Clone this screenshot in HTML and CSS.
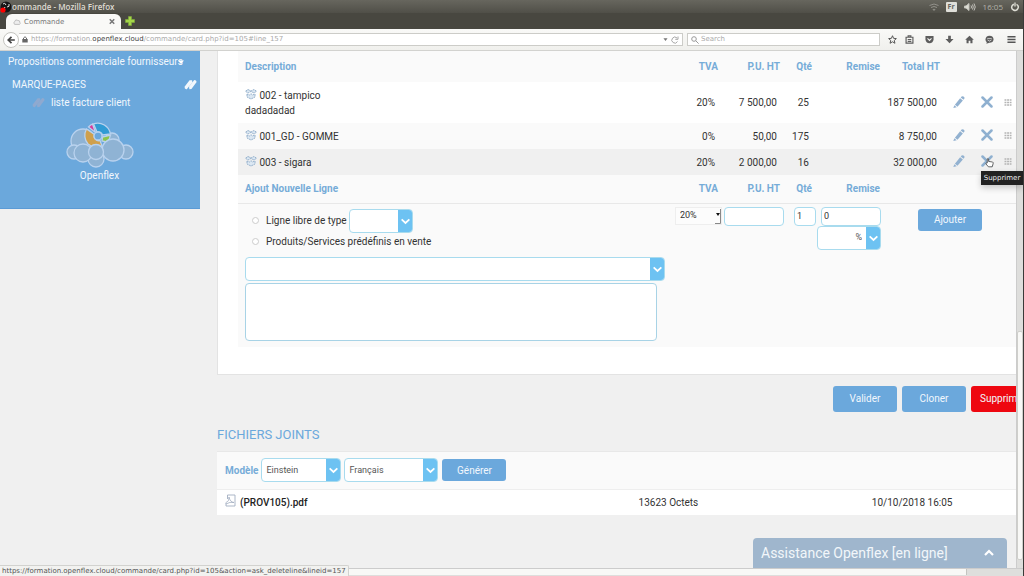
FILE: index.html
```html
<!DOCTYPE html>
<html lang="fr">
<head>
<meta charset="utf-8">
<title>Commande</title>
<link rel="stylesheet" href="styles.css">
</head>
<body>
<svg class="defs" aria-hidden="true">
  <symbol id="chevron" viewBox="0 0 10 10"><path d="M1.5 3.5 5 6.8 8.5 3.5" fill="none" stroke="#fff" stroke-width="1.6"/></symbol>
  <symbol id="box" viewBox="0 0 12 12"><path d="M3 1.5 6 3 9 1.5 11.5 3.2 9 5 6 3.4 3 5 .5 3.2ZM2 6v3l4 2 4-2V6L7.500 7 6 5.600 4.500 7Z" fill="#dce8f3" stroke="#8fabc8" stroke-width=".9" stroke-dasharray="2 .6"/></symbol>
  <symbol id="pencil" viewBox="0 0 12 12"><path d="M8.600.6Q10.800-.4 11.700 2L10.500 3.700 7.700 1.500ZM7.100 2.200 9.900 4.500 4.500 10.800 1.900 8.700ZM1.400 9.300 3.700 11.200.3 12Z" fill="#92b1d0"/></symbol>
  <symbol id="cross" viewBox="0 0 12 12"><path d="M1.500 1.500 10.500 10.500M10.500 1.500 1.500 10.500" fill="none" stroke="#8fb0d0" stroke-width="2.500" stroke-linecap="round"/></symbol>
  <symbol id="grip" viewBox="0 0 8 8"><path d="M.5 2H7.500M.5 4.500H7.500M.5 7H7.500" fill="none" stroke="#b4b4b4" stroke-width="1.700" stroke-dasharray="1.900 .7"/></symbol>
  <symbol id="books" viewBox="0 0 14 12"><path d="M6 1 .6 8Q.4 11 3 10.600L9 3 8.700 1ZM11 .6 5.400 8 5.800 10.700 8 10.200 13.600 2.700Q13.500.6 11 .6Z" fill="currentColor"/></symbol>
</svg>

<header class="titlebar">
  <svg class="app-icon" viewBox="0 0 12 12"><circle cx="6" cy="6" r="5.500" fill="#161616"/><path d="M3 3Q5 1 6 4M9 3Q10 6 7 6M5 9Q3 8 5 6" stroke="#ddd" fill="none"/><circle cx="3" cy="9" r="2.600" fill="#f00"/></svg>
  <span class="window-title">ommande - Mozilla Firefox</span>
  <div class="tray">
    <svg class="ico-10" viewBox="0 0 10 10" fill="none" stroke="#92918a" stroke-width="1"><path d="M.5 3.500Q5 .5 9.500 3.500M2 5.500Q5 3.500 8 5.500M4 7.500Q5 7 6 7.500L5 8.500Z"/></svg>
    <span class="lang">Fr</span>
    <svg class="ico-12" viewBox="0 0 12 10" fill="none" stroke="#c4c3bc" stroke-width="1"><path d="M.5 4H2L5 1.500V8.500L2 6H.5Z" fill="#dfdfd6"/><path d="M7 3.500Q8 5 7 6.500M8.500 2.500Q10 5 8.500 7.500M10 1.500Q12.500 5 10 8.500"/></svg>
    <span>16:05</span>
    <svg class="ico-10" viewBox="0 0 10 10" fill="none" stroke="#dfdfd6"><circle cx="5" cy="5.200" r="3.200" stroke-width="1.500" stroke-dasharray="17 3.100" transform="rotate(-62 5 5.200)"/><path d="M5 .5V4.500" stroke-width="1.300"/></svg>
  </div>
</header>
<div class="tabstrip">
  <div class="tab">
    <svg class="ico-8" viewBox="0 0 10 10" fill="#eee" stroke="#b2b2b2"><path d="M2 8Q0 6 2 4.500 3 1 6 3 9 3 8.500 5.500 10 7 8 8Z"/></svg>
    <span class="tab-title">Commande</span>
    <button class="plain" type="button" aria-label="Fermer"><svg class="ico-6" viewBox="0 0 8 8"><path d="M1 1 7 7M7 1 1 7" stroke="#777" stroke-width="2"/></svg></button>
  </div>
  <button class="plain new-tab" type="button" aria-label="Nouvel onglet"><svg class="ico-10" viewBox="0 0 10 10"><path d="M3.500.5H6.500V3.500H9.500V6.500H6.500V9.500H3.500V6.500H.5V3.500H3.500Z" fill="#a4d648" stroke="#82ad3a" stroke-width=".6"/></svg></button>
</div>
<div class="toolbar">
  <button class="back" type="button" aria-label="Retour"><svg class="ico-8" viewBox="0 0 8 8"><path d="M4.500.8 1.200 4 4.500 7.200M1.500 4H7.800" fill="none" stroke="#444" stroke-width="1.700"/></svg></button>
  <div class="address">
    <svg class="ico-6" viewBox="0 0 6 7"><path d="M1.500 3V2Q3-.5 4.500 2V3" fill="none" stroke="#666"/><path d="M.3 3H5.700V6.500H.3Z" fill="#666"/></svg>
    <span class="url">https://formation.<b>openflex.cloud</b>/commande/card.php?id=105#line_157</span>
    <svg class="ico-5" viewBox="0 0 6 6"><path d="M.5 1.500H5.500L3 4.800Z" fill="#777"/></svg>
    <svg class="ico-8" viewBox="0 0 8 8" fill="none" stroke="#a5a5a5"><path d="M6.500 5.500A3 3 0 1 1 6 2M7 .5V3.300H4.300"/></svg>
  </div>
  <label class="search">
    <svg class="ico-8" viewBox="0 0 8 8" fill="none" stroke="#999"><circle cx="3" cy="3" r="2.300"/><path d="M4.800 4.800 7.600 7.600"/></svg>
    <input type="text" placeholder="Search" aria-label="Search">
  </label>
  <div class="tools">
    <svg class="ico-9 star" viewBox="0 0 10 10"><path d="M5 .8 6.200 3.700 9.300 4 7 6 7.700 9.200 5 7.500 2.300 9.200 3 6 .7 4 3.800 3.700Z" fill="none" stroke="#555" stroke-width="1.100"/></svg>
    <svg class="ico-9" viewBox="0 0 10 10"><path d="M1.200 2.500H8.800V9H1.200ZM3.500 2.500V1H6.500V2.500M3 5H7M3 7H7" fill="none" stroke="#5d5d5d" stroke-width="1.300"/></svg>
    <svg class="ico-9" viewBox="0 0 10 10"><path d="M.5 1H9.500V5Q9 9 5 9.300 1 9 .5 5Z" fill="#5d5d5d"/><path d="M2.800 3.800 5 6 7.200 3.800" fill="none" stroke="#f4f4f2" stroke-width="1.200"/></svg>
    <svg class="ico-9" viewBox="0 0 10 10"><path d="M3.500.8H6.500V4.500H9.500L5 9.300.5 4.500H3.500Z" fill="#5d5d5d"/></svg>
    <svg class="ico-9" viewBox="0 0 10 10"><path d="M5 .8 9.800 5.300H8.300V9.300H6V6.300H4V9.300H1.700V5.300H.2Z" fill="#5d5d5d"/></svg>
    <svg class="ico-9" viewBox="0 0 10 10"><path d="M5 .8Q9.500 1 9.500 5 9 8.500 5 8.700L1.500 9.600 2 8Q.5 7 .5 5 .8 1 5 .8Z" fill="#5d5d5d"/><path d="M2.500 4H7.500M2.800 5.500Q5 8 7.200 5.500" stroke="#eee" fill="none" stroke-width=".8"/></svg>
    <svg class="ico-9 menu" viewBox="0 0 10 10"><path d="M.5 2H9.500M.5 5H9.500M.5 8H9.500" stroke="#555" stroke-width="1.800"/></svg>
  </div>
</div>

<div class="browser-body">
<div class="page">
  <nav class="sidebar">
    <a class="side-top" href="#">Propositions commerciale fournisseurs<svg class="caret" viewBox="0 0 6 6"><path d="M0 1.500H6L3 5Z" fill="#fff"/></svg></a>
    <div class="side-head"><span>MARQUE-PAGES</span><svg class="book-icon" aria-hidden="true"><use href="#books"/></svg></div>
    <a class="side-item" href="#"><svg class="book-icon dim" aria-hidden="true"><use href="#books"/></svg>liste facture client</a>
    <a class="logo" href="#">
      <svg viewBox="0 0 68 46" fill="#8fb3d4" stroke="#b9d2ee" stroke-width="1.300">
        <circle cx="46" cy="18" r="7"/><circle cx="17" cy="19" r="12"/><circle cx="8" cy="30" r="7"/><circle cx="60" cy="30" r="7"/><circle cx="30" cy="37" r="8"/><circle cx="17" cy="31" r="9"/>
        <path d="M28.500 12.500 20.500 7A13 13 0 0 0 22 22L27 25 36 24 34 18.500A4.500 4.500 0 0 1 28.500 12.500Z" fill="#cfa04c"/>
        <path d="M31 10 27.500 1.800A13 13 0 0 1 44.500 12L36.500 13A4.500 4.500 0 0 0 31 10Z" fill="#319bd4"/>
        <path d="M29.500 10.500 22.500 5A13 13 0 0 1 26.500 2Z" fill="#d63b9c"/>
        <path d="M36.500 15 44.600 13A13 13 0 0 1 41 20L36 19Z" fill="#8dc44c"/>
        <circle cx="32" cy="14" r="4" fill="#6ba8dc"/>
        <circle cx="47" cy="28" r="11"/><circle cx="30" cy="30" r="7.500"/>
      </svg>
      <span>Openflex</span>
    </a>
  </nav>

  <main class="content">
    <section class="panel">
      <table class="lines">
        <colgroup><col><col class="c-tva"><col class="c-pu"><col class="c-qty"><col class="c-disc"><col class="c-total"><col class="c-edit"><col class="c-del"><col class="c-grip"></colgroup>
        <thead>
          <tr class="head-top"><th class="left" scope="col">Description</th><th scope="col">TVA</th><th scope="col">P.U. HT</th><th scope="col">Qté</th><th scope="col">Remise</th><th scope="col">Total HT</th><td colspan="3"></td></tr>
        </thead>
        <tbody>
          <tr class="tall"><td class="left"><svg class="box-icon" aria-hidden="true"><use href="#box"/></svg> 002 - tampico<br>dadadadad</td><td>20%</td><td>7 500,00</td><td>25</td><td></td><td>187 500,00</td><td class="act"><a href="#" aria-label="Modifier"><svg class="act-icon"><use href="#pencil"/></svg></a></td><td class="act"><a href="#" aria-label="Supprimer"><svg class="act-icon"><use href="#cross"/></svg></a></td><td class="act"><svg class="grip-icon"><use href="#grip"/></svg></td></tr>
          <tr class="alt"><td class="left"><svg class="box-icon" aria-hidden="true"><use href="#box"/></svg> 001_GD - GOMME</td><td>0%</td><td>50,00</td><td>175</td><td></td><td>8 750,00</td><td class="act"><a href="#" aria-label="Modifier"><svg class="act-icon"><use href="#pencil"/></svg></a></td><td class="act"><a href="#" aria-label="Supprimer"><svg class="act-icon"><use href="#cross"/></svg></a></td><td class="act"><svg class="grip-icon"><use href="#grip"/></svg></td></tr>
          <tr class="hovered"><td class="left"><svg class="box-icon" aria-hidden="true"><use href="#box"/></svg> 003 - sigara</td><td>20%</td><td>2 000,00</td><td>16</td><td></td><td>32 000,00</td><td class="act"><a href="#" aria-label="Modifier"><svg class="act-icon"><use href="#pencil"/></svg></a></td><td class="act"><a class="delete" href="#" aria-label="Supprimer"><svg class="act-icon"><use href="#cross"/></svg><svg class="pointer" viewBox="0 0 10 11"><path d="M2.500 6V1.500Q3.300.3 4 1.500V4.300L8.500 5Q9.500 5.500 9 7L8 10.300H3.800L1 7Q1 5.500 2.500 6Z" fill="#fff" stroke="#444" stroke-width=".9"/></svg></a></td><td class="act"><svg class="grip-icon"><use href="#grip"/></svg></td></tr>
        </tbody>
        <tbody>
          <tr class="head-add"><th class="left" scope="col">Ajout Nouvelle Ligne</th><th scope="col">TVA</th><th scope="col">P.U. HT</th><th scope="col">Qté</th><th scope="col">Remise</th><td colspan="4"></td></tr>
          <tr class="add-row">
            <td class="left">
              <div class="choice"><input type="radio" id="free" name="kind"><label for="free">Ligne libre de type</label><span class="combo type"><select aria-label="Type"><option></option></select><svg><use href="#chevron"/></svg></span></div>
              <div class="choice second"><input type="radio" id="pre" name="kind"><label for="pre">Produits/Services prédéfinis en vente</label></div>
              <span class="combo product"><select aria-label="Produit"><option></option></select><svg><use href="#chevron"/></svg></span>
              <textarea aria-label="Description"></textarea>
            </td>
            <td><span class="native"><select aria-label="TVA"><option>20%</option></select><svg viewBox="0 0 6 16"><path d="M1 5H5L3 8Z" fill="#111"/><path d="M5.500 1V15.500H0" fill="none" stroke="#888"/></svg></span></td>
            <td><input class="field" type="text" aria-label="P.U. HT"></td>
            <td><input class="field qty" type="text" value="1" aria-label="Qté"></td>
            <td><input class="field" type="text" value="0" aria-label="Remise"><span class="combo unit"><select aria-label="Unité"><option>%</option></select><svg><use href="#chevron"/></svg></span></td>
            <td class="submit" colspan="4"><button class="btn" type="button">Ajouter</button></td>
          </tr>
        </tbody>
      </table>
    </section>

    <div class="actions"><button class="btn big" type="button">Valider</button><button class="btn big" type="button">Cloner</button><button class="btn big danger" type="button">Supprimer</button></div>

    <h2>FICHIERS JOINTS</h2>
    <section class="files">
      <div class="generate">
        <label for="model">Modèle</label>
        <span class="combo model"><select id="model"><option>Einstein</option></select><svg><use href="#chevron"/></svg></span>
        <span class="combo language"><select aria-label="Langue"><option>Français</option></select><svg><use href="#chevron"/></svg></span>
        <button class="btn" type="button">Générer</button>
      </div>
      <table class="file-list"><tr>
        <td><a href="#"><svg class="pdf" viewBox="0 0 11 13"><path d="M2.500 5V1H10V12H1V9" fill="none" stroke="#a3afc2" stroke-width=".9"/><path d="M.5 9Q5 7 4 3 5 8 9 8.500 5 7.500 1 10" fill="none" stroke="#a3afc2" stroke-width=".8"/></svg>(PROV105).pdf</a></td>
        <td class="size">13623 Octets</td><td class="date">10/10/2018 16:05</td>
      </tr></table>
    </section>
  </main>
  <button class="assist" type="button"><span>Assistance Openflex [en ligne]</span><svg class="ico-12" viewBox="0 0 12 10"><path d="M2 7 6 3 10 7" fill="none" stroke="#fff" stroke-width="2.200"/></svg></button>
</div>
<div class="vscroll"><i></i></div>
<span class="tooltip" role="tooltip">Supprimer</span>
</div>
<div class="hscroll"><i></i></div>
<div class="status">https://formation.openflex.cloud/commande/card.php?id=105&amp;action=ask_deleteline&amp;lineid=157</div>
</body>
</html>
```

FILE: styles.css
```css
* { box-sizing: border-box; }
body {
  margin: 0;
  height: 100vh;
  display: flex;
  flex-direction: column;
  overflow: hidden;
  position: relative;
  background: #f0f0f0;
  border-right: 1px solid #3a3a38;
  color: #333;
  font: 10px/15px Roboto, "Noto Sans", sans-serif;
}
.defs { position: absolute; width: 0; height: 0; }
svg { flex: none; }
a { color: inherit; text-decoration: none; }
button, input, select, textarea { font: inherit; color: inherit; margin: 0; }
.plain { border: 0; padding: 0; background: none; display: flex; }
.ico-5 { width: 5px; height: 5px; }
.ico-6 { width: 6px; height: 7px; }
.ico-8 { width: 8px; height: 8px; }
.ico-9 { width: 9px; height: 9px; }
.ico-10 { width: 10px; height: 10px; }
.ico-12 { width: 12px; height: 10px; }

.titlebar {
  display: flex;
  align-items: center;
  height: 13px;
  flex: none;
  background: linear-gradient(#67665e, #504f48);
  color: #dfdbd2;
  font: 8px/12px "Open Sans", "Noto Sans", sans-serif;
}
.app-icon { width: 12px; height: 12px; }
.window-title { font-weight: 600; flex: 1; }
.tray { display: flex; align-items: center; gap: 7px; padding-right: 3px; color: #b3b2aa; }
.lang { background: #dfdfd9; color: #66655e; border-radius: 1px; width: 11px; line-height: 10px; text-align: center; font-weight: 700; font-size: 7px; }
.tabstrip { display: flex; flex: none; height: 16px; background: #484740; gap: 4px; padding-left: 6px; align-items: center; }
.tab {
  display: flex;
  align-items: center;
  gap: 3px;
  width: 115px;
  height: 15px;
  align-self: flex-end;
  padding: 0 6px 0 7px;
  background: #f9f9f7;
  border-radius: 6px 6px 0 0;
  color: #777;
  font: 7px/14px "DejaVu Sans", sans-serif;
}
.tab-title { flex: 1; }
.toolbar {
  display: flex;
  align-items: center;
  flex: none;
  height: 22px;
  padding: 0 7px 0 3px;
  background: linear-gradient(#f9f9f7, #f0f0ed);
  border-bottom: 1px solid #d2d2cf;
  font: 7px/11px "DejaVu Sans", sans-serif;
}
.back { width: 16px; height: 16px; padding: 0; border: 1px solid #c4c4c0; border-radius: 50%; background: #fff; display: flex; align-items: center; justify-content: center; }
.address, .search { display: flex; align-items: center; height: 13px; background: #fff; border: 1px solid #ccccc8; }
.address { flex: 1; border-left: 0; gap: 3px; padding: 0 3px; color: #aaa; }
.url { flex: 1; }
.url b { color: #444; font-weight: 400; }
.search { width: 193px; margin: 0 8px 0 4px; padding: 0 3px; gap: 2px; }
.search input { border: 0; padding: 0; background: none; width: 100%; outline: 0; }
.search input::placeholder { color: #aaa; opacity: 1; }
.tools { display: flex; gap: 11px; }
.star { margin-right: -3px; }
.menu { margin-left: 2px; }

.browser-body { flex: 1; display: flex; min-height: 0; position: relative; }
.page { flex: 1; min-width: 0; display: flex; align-items: flex-start; gap: 17px; overflow: hidden; position: relative; }
.vscroll { width: 7px; flex: none; background: #dededc; border-left: 1px solid #ccc; display: flex; flex-direction: column; justify-content: flex-end; padding-bottom: 8px; }
.vscroll i { height: 45%; background: #f8f8f6; border: 1px solid #cfcfcb; border-radius: 2px; }
.hscroll { flex: none; height: 8px; background: #dededc; border-top: 1px solid #ccc; padding-right: 56px; }
.hscroll i { display: block; height: 6px; background: #f8f8f6; border-right: 1px solid #c4c4c0; }

.sidebar { width: 200px; flex: none; background: #6ba8dc; border-bottom: 1px solid #5b9bd6; color: #f2f7fc; padding: 3px 3px 25px 8px; }
.side-top { display: flex; align-items: center; white-space: nowrap; }
.caret { width: 6px; height: 6px; margin-left: -5px; }
.side-head { display: flex; justify-content: space-between; align-items: center; padding: 8px 0 3px 4px; }
.book-icon { width: 13px; height: 12px; }
.dim { color: #8fa9cf; }
.side-item { display: flex; align-items: center; gap: 6px; padding-left: 24px; }
.logo { display: flex; flex-direction: column; align-items: center; padding: 12px 6px 0 0; }
.logo svg { width: 68px; height: 46px; }

.content { flex: 1; min-width: 0; }
.panel { background: #fff; padding: 0 0 27px 20px; border: solid #e3e3e3; border-width: 0 0 1px 1px; }
.lines { width: 100%; table-layout: fixed; border-collapse: collapse; }
.c-tva { width: 54px; } .c-pu { width: 62px; } .c-qty { width: 32px; }
.c-disc { width: 68px; } .c-total { width: 60px; } .c-edit { width: 30px; }
.c-del { width: 26px; } .c-grip { width: 16px; }
.lines th, .lines td { text-align: right; padding: 0 7px 0 0; }
.lines th { color: #76acd8; font-weight: 700; padding-right: 4px; }
.lines .left { text-align: left; padding-left: 7px; }
.lines tbody tr { height: 26px; }
.lines .head-top { height: 31px; background: #fafafa; }
.lines tbody .tall { height: 41px; }
.lines .alt, .lines .add-row, .lines .head-add { background: #fafafa; }
.lines tbody .hovered { background: #f0f0f0; }
.lines tbody .head-add { height: 28px; border-bottom: 1px solid #e8e8e8; }
.box-icon { width: 12px; height: 12px; vertical-align: -1px; }
.lines .act { text-align: center; padding: 0 0 3px; }
.act-icon { width: 12px; height: 12px; vertical-align: middle; }
.grip-icon { width: 8px; height: 8px; vertical-align: middle; }
.delete { position: relative; }
.pointer { position: absolute; left: 4px; top: 2px; width: 9px; height: 11px; z-index: 2; }
.tooltip { position: absolute; right: 0; top: 120px; width: 42px; background: #222; color: #eee; font: 7px/14px "DejaVu Sans", sans-serif; text-align: center; box-shadow: 0 3px 6px #0003; }

.lines .add-row td { vertical-align: top; padding: 3px 0 6px; }
.lines .add-row .left { padding: 5px 0 6px 7px; }
.choice { display: flex; align-items: center; gap: 7px; padding-left: 7px; }
.choice input { appearance: none; width: 7px; height: 7px; border: 1px solid #ccc; border-radius: 50%; background: #fff; }
.second { height: 18px; margin-bottom: 6px; }
.combo { display: flex; height: 24px; border: 1px solid #a8dbee; border-radius: 4px; background: #fff; overflow: hidden; color: #555; }
.combo select { appearance: none; flex: 1; min-width: 0; border: 0; background: none; padding: 0 4px; font-size: 9px; outline: 0; }
.combo svg { width: 15px; height: 24px; margin: -1px -1px 0 0; padding: 0 2px; background: #6dc2f2; }
.type { width: 64px; margin-left: -5px; }
.product { max-width: 420px; margin-bottom: 2px; }
textarea { display: block; width: 100%; max-width: 412px; height: 58px; border: 1px solid #a8d3e6; border-radius: 4px; background: #fff; resize: none; }
.native { display: flex; height: 18px; margin-left: 7px; background: #fcfcfc; border: 1px solid #eee; }
.native select { appearance: none; border: 0; background: none; flex: 1; min-width: 0; padding: 0 4px; font-size: 9px; }
.native svg { width: 6px; height: 16px; }
.field { display: inline-block; width: 60px; height: 19px; border: 1px solid #a8dbee; border-radius: 4px; background: #fff; padding: 0 2px; vertical-align: top; font-size: 9px; }
.qty { width: 22px; }
.lines .add-row td:nth-child(5) { padding-right: 3px; }
.unit { width: 64px; margin-left: auto; }
.unit select { text-align: right; }
.lines .add-row .submit { text-align: center; padding-top: 5px; }
.btn { width: 64px; height: 22px; padding: 0; border: 0; border-radius: 3px; background: #6ba8dc; color: #f2f7fc; flex: none; }
.big { height: 26px; }
.danger { background: #ee0710; }
.actions { display: flex; gap: 5px; justify-content: flex-end; padding-top: 11px; margin-right: -19px; }
h2 { margin: 13px 0 6px; font: 400 13px/20px Roboto, sans-serif; color: #6ba8dc; }
.files { background: #fff; border-top: 1px solid #e8e8e8; }
.generate { display: flex; align-items: center; gap: 3px; height: 38px; padding-left: 8px; background: #fafafa; border-bottom: 1px solid #eee; }
.generate label { color: #76acd8; font-weight: 700; }
.generate .btn { margin-left: 1px; }
.model { width: 80px; }
.language { width: 94px; }
.file-list { width: 100%; table-layout: fixed; border-collapse: collapse; }
.file-list td { height: 25px; padding: 0; }
.file-list td:first-child { padding-left: 8px; width: 39%; font-weight: 500; color: #222; }
.file-list .size { text-align: center; }
.file-list .date { text-align: center; width: 26%; }
.pdf { width: 11px; height: 13px; margin-right: 4px; vertical-align: -1px; }
.assist { position: absolute; right: 9px; bottom: 0; width: 254px; height: 30px; display: flex; align-items: center; justify-content: space-between; padding: 0 12px 0 8px; border: 0; border-radius: 4px 4px 0 0; background: #9fb6cd; color: #f2f6fa; font: 14px/20px Roboto, sans-serif; }
.status { position: absolute; left: 0; bottom: 0; padding: 0 2px; background: #f2f2f0; border: solid #d2d2cf; border-width: 1px 1px 0 0; border-radius: 0 2px 0 0; color: #555; font: 7px/10px "DejaVu Sans", sans-serif; }
```
